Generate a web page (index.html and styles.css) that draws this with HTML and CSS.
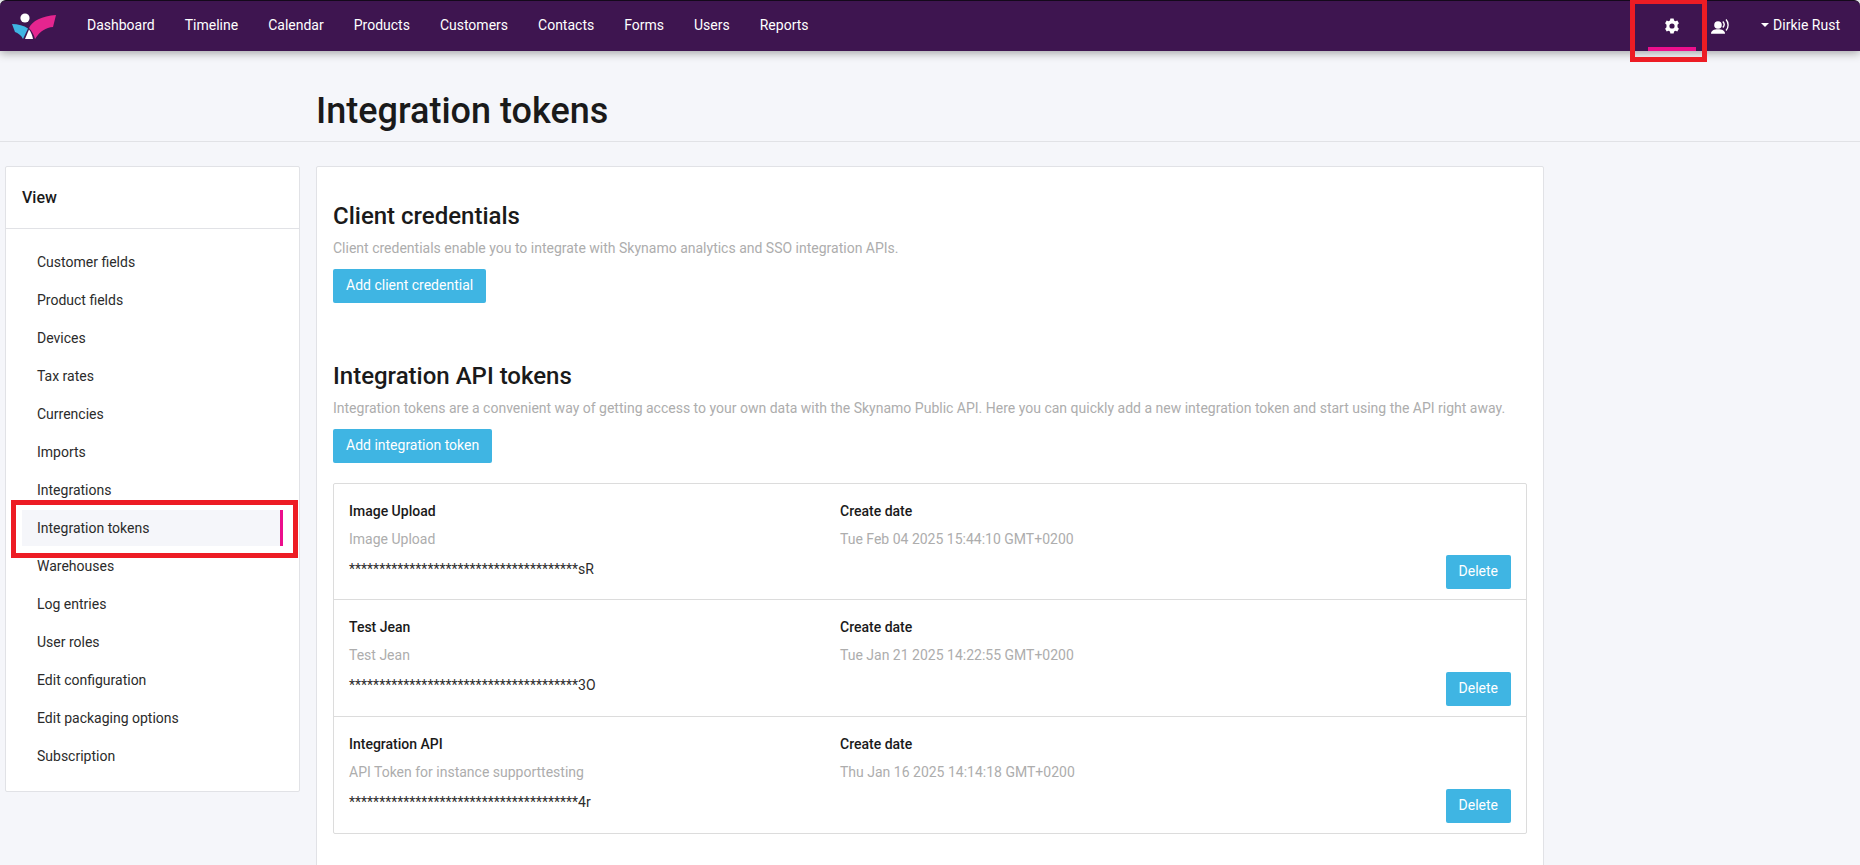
FILE: index.html
```html
<!DOCTYPE html>
<html lang="en">
<head>
<meta charset="utf-8">
<title>Integration tokens</title>
<link rel="stylesheet" href="styles.css">
</head>
<body>
<div class="page">
  <header class="navbar">
    <a class="logo" href="#" aria-label="Skynamo">
      <svg width="46" height="27" viewBox="0 0 46 27">
        <circle cx="13" cy="5" r="4.600" fill="#fff"/>
        <path d="M0 11C6 11 12 12.500 16 15.500L11 26C9 22 6 20 3 19Z" fill="#3fb5e3"/>
        <path d="M13 26L17 16.500C19 19 20.500 22.500 21 26Z" fill="#fff"/>
        <path d="M17 15C20 8 30 3 44 2L41 14C34 14.500 28 18 23 26C22 22 20 18 17 15Z" fill="#e5258f"/>
      </svg>
    </a>
    <nav class="nav-links">
      <a href="#">Dashboard</a>
      <a href="#">Timeline</a>
      <a href="#">Calendar</a>
      <a href="#">Products</a>
      <a href="#">Customers</a>
      <a href="#">Contacts</a>
      <a href="#">Forms</a>
      <a href="#">Users</a>
      <a href="#">Reports</a>
    </nav>
    <div class="nav-right">
      <a class="nav-icon nav-icon-active" href="#" aria-label="Settings">
        <svg width="16" height="16" viewBox="0 0 16 16">
          <path fill-rule="evenodd" fill="#fff" d="M6.400 0.600H9.600L10.100 2.500L11.400 3.200L13.300 2.600L14.900 5.300L13.500 6.700V8.300V9.300L14.900 10.700L13.300 13.400L11.400 12.800L10.100 13.500L9.600 15.400H6.400L5.900 13.500L4.600 12.800L2.700 13.400L1.100 10.700L2.500 9.300V6.700L1.100 5.300L2.700 2.600L4.600 3.200L5.900 2.500ZM8 5.400A2.600 2.600 0 1 0 8 10.600A2.600 2.600 0 1 0 8 5.400Z"/>
        </svg>
      </a>
      <a class="nav-icon nav-icon-voice" href="#" aria-label="Announcements">
        <svg width="19" height="15" viewBox="0 0 19 15">
          <circle cx="7" cy="6" r="3.800" fill="#fff"/>
          <path d="M0 14.700C0 11.700 3 10.300 7 10.300C11 10.300 14 11.700 14 14.700Z" fill="#fff"/>
          <path d="M11.800 2.500C13.400 4.200 13.400 6.800 11.800 8.500M15 0.500C17.800 3.500 17.800 8.500 15 11.500" fill="none" stroke="#fff" stroke-width="1.400"/>
        </svg>
      </a>
      <a class="user-menu" href="#"><span class="caret"></span>Dirkie Rust</a>
    </div>
  </header>

  <div class="title-bar">
    <h1>Integration tokens</h1>
  </div>

  <div class="content">
    <aside class="side-card">
      <div class="side-head">View</div>
      <ul class="side-list">
        <li><a href="#">Customer fields</a></li>
        <li><a href="#">Product fields</a></li>
        <li><a href="#">Devices</a></li>
        <li><a href="#">Tax rates</a></li>
        <li><a href="#">Currencies</a></li>
        <li><a href="#">Imports</a></li>
        <li><a href="#">Integrations</a></li>
        <li><a class="active" href="#">Integration tokens</a></li>
        <li><a href="#">Warehouses</a></li>
        <li><a href="#">Log entries</a></li>
        <li><a href="#">User roles</a></li>
        <li><a href="#">Edit configuration</a></li>
        <li><a href="#">Edit packaging options</a></li>
        <li><a href="#">Subscription</a></li>
      </ul>
    </aside>

    <main class="main-card">
      <section class="block">
        <h2>Client credentials</h2>
        <p class="muted">Client credentials enable you to integrate with Skynamo analytics and SSO integration APIs.</p>
        <button class="btn" type="button">Add client credential</button>
      </section>
      <section class="block block-tokens">
        <h2>Integration API tokens</h2>
        <p class="muted">Integration tokens are a convenient way of getting access to your own data with the Skynamo Public API. Here you can quickly add a new integration token and start using the API right away.</p>
        <button class="btn" type="button">Add integration token</button>
        <div class="token-list">
          <article class="token">
            <div class="token-main">
              <strong>Image Upload</strong>
              <span class="muted">Image Upload</span>
              <span class="secret">**************************************sR</span>
            </div>
            <div class="token-date">
              <strong>Create date</strong>
              <span class="muted">Tue Feb 04 2025 15:44:10 GMT+0200</span>
            </div>
            <button class="btn token-delete" type="button">Delete</button>
          </article>
          <article class="token">
            <div class="token-main">
              <strong>Test Jean</strong>
              <span class="muted">Test Jean</span>
              <span class="secret">**************************************3O</span>
            </div>
            <div class="token-date">
              <strong>Create date</strong>
              <span class="muted">Tue Jan 21 2025 14:22:55 GMT+0200</span>
            </div>
            <button class="btn token-delete" type="button">Delete</button>
          </article>
          <article class="token">
            <div class="token-main">
              <strong>Integration API</strong>
              <span class="muted">API Token for instance supporttesting</span>
              <span class="secret">**************************************4r</span>
            </div>
            <div class="token-date">
              <strong>Create date</strong>
              <span class="muted">Thu Jan 16 2025 14:14:18 GMT+0200</span>
            </div>
            <button class="btn token-delete" type="button">Delete</button>
          </article>
        </div>
      </section>
    </main>
  </div>

  <div class="mark mark-gear"></div>
  <div class="mark mark-item"></div>
</div>
</body>
</html>
```

FILE: styles.css
```css
* { box-sizing: border-box; }
html, body { margin: 0; padding: 0; height: 100%; }
body {
  background: #f5f6fa;
  color: #1a1a1a;
  font-family: Roboto, "Liberation Sans", sans-serif;
  font-size: 14px;
  line-height: 20px;
}
a { color: inherit; text-decoration: none; }
.page { position: relative; height: 865px; overflow: hidden; }

/* navbar */
.navbar {
  display: flex;
  align-items: center;
  height: 51px;
  background: #3e1550;
  border-top: 1px solid #14091b;
  border-radius: 6px 6px 0 0;
  box-shadow: 0 2px 10px rgba(0, 0, 0, .35);
  color: #fff;
  position: relative;
}
.logo { display: flex; margin-left: 12px; width: 75px; }
.nav-links { display: flex; gap: 30px; padding-bottom: 2px; }
.nav-right { display: flex; align-items: center; margin-left: auto; height: 100%; }
.nav-icon { display: flex; align-items: center; justify-content: center; height: 100%; }
.nav-icon-active { width: 48px; border-bottom: 4px solid #ec0f8c; padding-top: 3px; }
.nav-icon-voice { width: 49px; }
.user-menu { display: flex; align-items: center; padding: 0 20px 2px 16px; }
.caret {
  width: 0; height: 0;
  border: 4px solid transparent;
  border-top-color: #fff;
  border-bottom-width: 0;
  margin-right: 4px;
}

/* title */
.title-bar {
  height: 91px;
  padding: 37px 0 0 316px;
  border-bottom: 1px solid #e1e2e6;
}
h1 { margin: 0; font-size: 36px; line-height: 46px; font-weight: 500; color: #1a1a1a; }

/* layout */
.content { display: flex; align-items: flex-start; padding: 24px 0 0 5px; gap: 16px; }

/* sidebar */
.side-card {
  width: 295px;
  background: #fff;
  border: 1px solid #e1e2e6;
  border-radius: 2px;
}
.side-head {
  height: 62px;
  padding: 21px 16px 0;
  font-size: 16px;
  font-weight: 500;
  border-bottom: 1px solid #e1e2e6;
}
.side-list { list-style: none; margin: 0; padding: 15px 16px 17px; }
.side-list li { margin-bottom: 2px; }
.side-list li:last-child { margin-bottom: 0; }
.side-list a { display: block; height: 36px; padding: 8px 15px; color: #2b2b2b; }
.side-list a.active { background: #f5f6fa; border-right: 3px solid #ec0f8c; }

/* main */
.main-card {
  width: 1228px;
  min-height: 760px;
  background: #fff;
  border: 1px solid #e1e2e6;
  border-radius: 2px;
  padding: 33px 16px 0;
}
h2 { margin: 0; font-size: 24px; line-height: 32px; font-weight: 500; color: #1a1a1a; }
.muted { color: #adadad; }
p.muted { margin: 6px 0 11px; }
.btn {
  display: block;
  height: 34px;
  padding: 0 13px 2px;
  border: 0;
  border-radius: 2px;
  background: #3fb5e3;
  color: #fff;
  font: 400 14px/20px Roboto, "Liberation Sans", sans-serif;
}
.block-tokens { margin-top: 57px; }

.token-list { margin-top: 20px; border: 1px solid #dcdcdc; border-radius: 2px; }
.token {
  display: flex;
  align-items: flex-end;
  height: 116.4px;
  padding: 0 15px 10px;
  border-bottom: 1px solid #dcdcdc;
}
.token:last-child { border-bottom: 0; }
.token-main, .token-date { display: flex; flex-direction: column; align-self: flex-start; padding-top: 17px; }
.token-main { width: 491px; }
.token-date { flex: 1; }
.token strong { font-weight: 500; color: #1a1a1a; }
.token .muted { margin-top: 8px; }
.secret { margin-top: 10px; color: #2b2b2b; }
.token-delete { margin-left: auto; }

/* annotation overlays */
.mark { position: absolute; border: 5px solid #ed1c24; pointer-events: none; }
.mark-gear { left: 1630px; top: -1px; width: 77px; height: 63px; }
.mark-item { left: 11px; top: 500px; width: 287px; height: 58px; }
```
